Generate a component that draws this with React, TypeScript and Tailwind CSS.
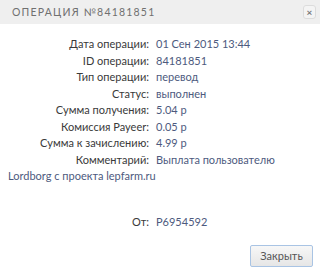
import React from "react";

const rows: [string, string][] = [
  ["Дата операции:", "01 Сен 2015 13:44"],
  ["ID операции:", "84181851"],
  ["Тип операции:", "перевод"],
  ["Статус:", "выполнен"],
  ["Сумма получения:", "5.04 р"],
  ["Комиссия Payeer:", "0.05 р"],
  ["Сумма к зачислению:", "4.99 р"],
];

function Row({ label, value }: { label: string; value: string }) {
  return (
    <div className="flex h-[16.5px] items-center">
      <div className="w-[149px] shrink-0 text-right text-[#3a3a3a]">{label}</div>
      <div className="pl-[7px] text-[#4d5a7e]">{value}</div>
    </div>
  );
}

export default function App() {
  return (
    <div
      className="w-[320px] h-[273px] overflow-hidden bg-white text-[11px] leading-4"
      style={{ fontFamily: "Lato, 'Noto Sans', sans-serif" }}>
      <div className="flex h-[24px] items-center justify-between bg-[#efefef] pl-3 pr-[4px]">
        <span className="text-[10.5px] tracking-[1.2px] text-[#707070]">
          ОПЕРАЦИЯ №84181851
        </span>
        <button className="flex h-[14px] w-[13px] items-center justify-center rounded-[3px] border border-[#dcdcdc] bg-[#f4f4f4] text-[10px] font-bold leading-none text-[#777]">
          ×
        </button>
      </div>
      <div className="pt-[12px]">
        {rows.map(([l, v]) => (
          <Row key={l} label={l} value={v} />
        ))}
        <Row label="Комментарий:" value="Выплата пользователю" />
        <div className="flex h-[16.5px] items-center pl-2 text-[#4d5a7e]">
          Lordborg с проекта lepfarm.ru
        </div>
        <div className="h-[29.5px]" />
        <Row label="От:" value="P6954592" />
      </div>
      <div className="flex justify-end pr-[7px] pt-[14px]">
        <button className="h-[22px] w-[63px] rounded-[2px] border border-[#a9c4e4] bg-gradient-to-b from-[#f7f7f7] to-[#e6e6e6] text-[11px] text-[#555]">
          Закрыть
        </button>
      </div>
    </div>
  );
}
